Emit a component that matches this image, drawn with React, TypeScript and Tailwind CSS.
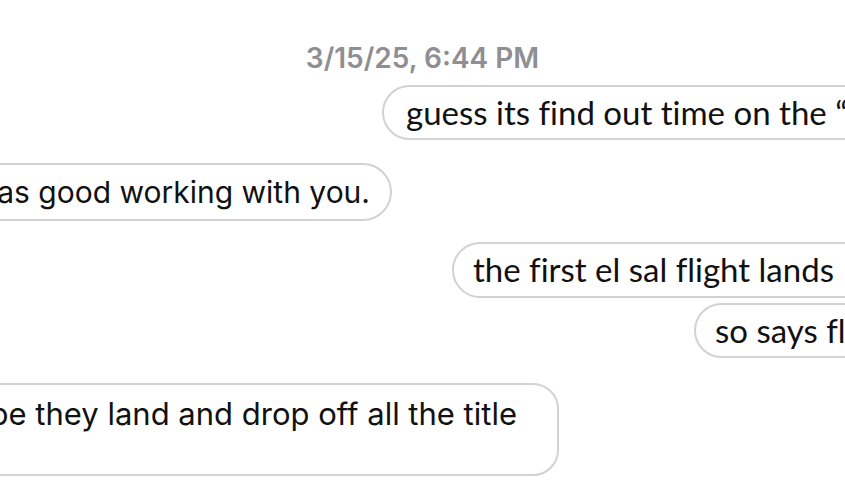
const sent = "font-['Lato','Inter',sans-serif] text-[33px] text-[#111] [font-variant-ligatures:none]";
const received = "font-['Inter','Liberation_Sans',sans-serif] text-[#111]";

export default function App() {
  return (
    <div className="flex h-[502px] w-[845px] flex-col overflow-hidden bg-white">
      <div className="mt-[42px] h-[32px] text-center font-['Inter','Liberation_Sans',sans-serif] text-[28px] font-semibold leading-[32px] text-[#8e8e93]">
        3/15/25, 6:44 PM
      </div>

      <div className="mt-[11px] flex pl-[382px]">
        <div className={`flex h-[55px] shrink-0 items-center whitespace-nowrap rounded-[28px] border-2 border-[#d2d2d2] pl-[22px] pr-6 ${sent}`}>
          guess its find out time on the “alien enemies act”
        </div>
      </div>

      <div className="mt-[23px] flex justify-end pr-[453px]">
        <div className={`flex h-[58px] shrink-0 items-center whitespace-nowrap rounded-[29px] border-2 border-[#d2d2d2] pl-6 pr-[20px] text-[30px] ${received}`}>
          it was good working with you.
        </div>
      </div>

      <div className="mt-[21px] flex pl-[452px]">
        <div className={`flex h-[56px] shrink-0 items-center whitespace-pre rounded-[28px] border-2 border-[#d2d2d2] pl-[19px] pr-6 ${sent}`}>
          {"the first el sal flight lands   today"}
        </div>
      </div>

      <div className="mt-[5px] flex pl-[694px]">
        <div className={`flex h-[55px] shrink-0 items-center whitespace-nowrap rounded-[28px] border-2 border-[#d2d2d2] pl-[19px] pr-6 ${sent}`}>
          so says flightaware
        </div>
      </div>

      <div className="mt-[25px] flex justify-end pr-[286px]">
        <div className={`h-[93px] shrink-0 whitespace-nowrap rounded-[26px] border-2 border-[#d2d2d2] pl-6 pr-[40px] pt-[10px] text-[31px] leading-[38px] ${received}`}>
          maybe they land and drop off all the title
          <br />
          {"\u00a0"}
        </div>
      </div>
    </div>
  );
}
